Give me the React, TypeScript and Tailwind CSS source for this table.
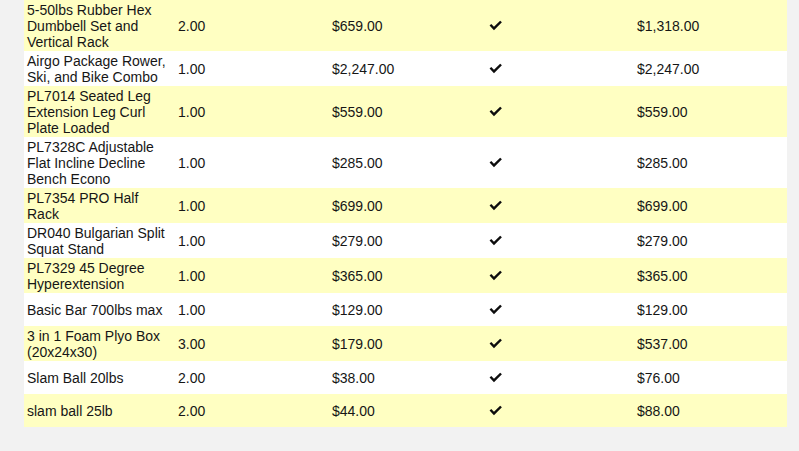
import React from "react";

type Row = { name: string[]; qty: string; price: string; total: string };

const rows: Row[] = [
  { name: ["5-50lbs Rubber Hex", "Dumbbell Set and", "Vertical Rack"], qty: "2.00", price: "$659.00", total: "$1,318.00" },
  { name: ["Airgo Package Rower,", "Ski, and Bike Combo"], qty: "1.00", price: "$2,247.00", total: "$2,247.00" },
  { name: ["PL7014 Seated Leg", "Extension Leg Curl", "Plate Loaded"], qty: "1.00", price: "$559.00", total: "$559.00" },
  { name: ["PL7328C Adjustable", "Flat Incline Decline", "Bench Econo"], qty: "1.00", price: "$285.00", total: "$285.00" },
  { name: ["PL7354 PRO Half", "Rack"], qty: "1.00", price: "$699.00", total: "$699.00" },
  { name: ["DR040 Bulgarian Split", "Squat Stand"], qty: "1.00", price: "$279.00", total: "$279.00" },
  { name: ["PL7329 45 Degree", "Hyperextension"], qty: "1.00", price: "$365.00", total: "$365.00" },
  { name: ["Basic Bar 700lbs max"], qty: "1.00", price: "$129.00", total: "$129.00" },
  { name: ["3 in 1 Foam Plyo Box", "(20x24x30)"], qty: "3.00", price: "$179.00", total: "$537.00" },
  { name: ["Slam Ball 20lbs"], qty: "2.00", price: "$38.00", total: "$76.00" },
  { name: ["slam ball 25lb"], qty: "2.00", price: "$44.00", total: "$88.00" },
];

function Check() {
  return (
    <svg width="13" height="11" viewBox="0 0 12 10" className="block">
      <path d="M0.5 5.1 L2.1 3.6 L4.6 6.1 L10.3 0.5 L11.9 2 L4.6 9.3 Z" fill="#0d0d0d" />
    </svg>
  );
}

export default function App() {
  return (
    <div
      className="w-[799px] h-[451px] bg-[#f2f2f2] overflow-hidden text-[14px] leading-[16px] text-[#161616]"
      style={{ fontFamily: '"Liberation Sans", Arial, sans-serif' }}
    >
      <div className="ml-[24px] w-[763px] flex flex-col">
        {rows.map((r, i) => (
          <div
            key={i}
            className={`grid grid-cols-[151px_154px_157px_148px_153px] min-h-[33px] ${
              i % 2 === 0 ? "bg-[#ffffc2]" : "bg-white"
            }`}
          >
            <div className="flex flex-col justify-center pl-[3px] py-[1.5px]">
              {r.name.map((l, j) => (
                <span key={j} className="block whitespace-nowrap">
                  {l}
                </span>
              ))}
            </div>
            <div className="flex items-center pl-[3px]">{r.qty}</div>
            <div className="flex items-center pl-[3px]">{r.price}</div>
            <div className="flex items-center pl-[3px]">
              <Check />
            </div>
            <div className="flex items-center pl-[3px]">{r.total}</div>
          </div>
        ))}
      </div>
    </div>
  );
}
